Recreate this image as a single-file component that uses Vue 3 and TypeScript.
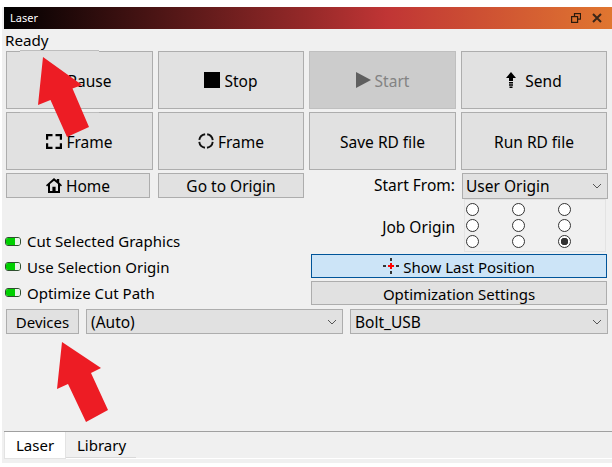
<script setup lang="ts">
const columns = [0, 1, 2];
const rows = [0, 1, 2];
const options = ['Cut Selected Graphics', 'Use Selection Origin', 'Optimize Cut Path'];
</script>

<template>
  <div class="panel">
    <header class="titlebar">
      <span class="title">Laser</span>
      <span class="window-buttons">
        <svg width="10" height="10" viewBox="0 0 10 10" fill="none" stroke="#2a1a0c" stroke-width="1.2">
          <rect x="3.5" y="0.6" width="6" height="5.5" />
          <rect x="0.6" y="3.6" width="6" height="5.8" fill="#d9702f" />
        </svg>
        <svg width="10" height="10" viewBox="0 0 10 10" fill="none" stroke="#3a2618" stroke-width="2">
          <path d="M1 1l8 8M9 1l-8 8" />
        </svg>
      </span>
    </header>
    <div class="status">Ready</div>

    <section class="actions">
      <button class="btn big">
        <svg width="16" height="16" viewBox="0 0 16 16"><path d="M2 1h4v14H2zM10 1h4v14h-4z" /></svg>
        <span>Pause</span>
      </button>
      <button class="btn big">
        <svg width="16" height="16" viewBox="0 0 16 16"><rect width="16" height="16" /></svg>
        <span>Stop</span>
      </button>
      <button class="btn big disabled">
        <svg width="15" height="16" viewBox="0 0 15 16"><path d="M0 0l15 8L0 16z" fill="#5f5f5f" /></svg>
        <span>Start</span>
      </button>
      <button class="btn big send">
        <svg width="10" height="16" viewBox="0 0 10 16"><path d="M5 0l5 6H7v3H3V6H0zM3 10h4v1.5H3zM3 12.2h4v1.5H3zM3.5 14.4h3V16h-3z" /></svg>
        <span>Send</span>
      </button>

      <button class="btn big">
        <svg width="16" height="15" viewBox="0 0 16 15" fill="none" stroke="#000" stroke-width="2.2"><path d="M6.5 1.1H1.1v4.6M9.5 1.1h5.4v4.6M6.5 13.9H1.1V9.3M9.5 13.9h5.4V9.3" /></svg>
        <span>Frame</span>
      </button>
      <button class="btn big">
        <svg width="16" height="16" viewBox="0 0 16 16" fill="none" stroke="#111" stroke-width="1.9"><circle cx="8" cy="8" r="6.8" stroke-dasharray="8.6 2.08" stroke-dashoffset="-1" /></svg>
        <span>Frame</span>
      </button>
      <button class="btn big"><span>Save RD file</span></button>
      <button class="btn big"><span>Run RD file</span></button>

      <button class="btn short home">
        <svg width="16" height="15" viewBox="0 0 16 15"><path fill-rule="evenodd" d="M8 0l2.8 2.5V1h2.4v3.6L16 7.2l-1.1 1.2-.9-.8V15H2V7.6l-.9.8L0 7.2zM4 6.1V13h2.4V8.8h3.2V13H12V6.1L8 2.7z" /></svg>
        <span>Home</span>
      </button>
      <button class="btn short"><span>Go to Origin</span></button>
      <label class="field-label">Start From:</label>
      <div class="combo start-from">
        <span>User Origin</span>
        <svg class="chevron" width="10" height="6" viewBox="0 0 10 6"><path d="M1 1l4 4 4-4" /></svg>
      </div>
    </section>

    <section class="middle">
      <ul class="options">
        <li v-for="option in options" :key="option" class="option">
          <span class="toggle"><i></i><b></b></span>
          <span>{{ option }}</span>
        </li>
      </ul>
      <div class="controls">
        <div class="job-row">
          <span class="job-label">Job Origin</span>
          <div class="radio-grid">
            <template v-for="r in rows" :key="r">
              <input
                v-for="c in columns"
                :key="c"
                type="radio"
                name="origin"
                :checked="r === 2 && c === 2"
              />
            </template>
          </div>
        </div>
        <button class="btn wide active">
          <svg width="16" height="16" viewBox="0 0 16 16">
            <path d="M7 0h2v3H7zM7 13h2v3H7zM0 7h3v2H0zM13 7h3v2h-3z" fill="#333" />
            <path d="M5 7h6v2H5zM7 5h2v6H7z" fill="#f00" />
          </svg>
          <span>Show Last Position</span>
        </button>
        <button class="btn wide"><span>Optimization Settings</span></button>
      </div>
    </section>

    <section class="devices">
      <button class="btn device-btn"><span>Devices</span></button>
      <div class="combo auto">
        <span>(Auto)</span>
        <svg class="chevron" width="10" height="6" viewBox="0 0 10 6"><path d="M1 1l4 4 4-4" /></svg>
      </div>
      <div class="combo bolt">
        <span>Bolt_USB</span>
        <svg class="chevron" width="10" height="6" viewBox="0 0 10 6"><path d="M1 1l4 4 4-4" /></svg>
      </div>
    </section>

    <nav class="tabs">
      <span class="tab current">Laser</span>
      <span class="tab">Library</span>
    </nav>

    <svg class="callout" width="612" height="467" viewBox="0 0 612 467">
      <path d="M20 50h79v1H20zM20 112h79v1H20z" fill="#bdbdbd" />
      <path d="M20 51h79v1H20z" fill="#e1e1e1" />
      <path d="M43 57L82 85L72.5 88.5L89 127L67 137L50.5 100L38 105Z" fill="#ed1c24" />
      <path d="M62 342L101 368L91 373L108 410L86 422L68 384L57 389Z" fill="#ed1c24" />
    </svg>
  </div>
</template>

<style>
html,
body {
  margin: 0;
  background: #fff;
}
</style>

<style scoped>
.panel {
  position: relative;
  box-sizing: border-box;
  width: 610px;
  height: 456px;
  margin: 7px 0 0 2px;
  background: #f0f0f0;
  display: flex;
  flex-direction: column;
  font: 15.5px/20px "Noto Sans", sans-serif;
  color: #000;
}
.titlebar {
  height: 22px;
  margin-left: 2px;
  display: flex;
  align-items: center;
  justify-content: space-between;
  background: linear-gradient(90deg, #000 0%, #962929 50%, #c03535 63%, #e07630 100%);
  color: #fff;
  font-size: 11px;
}
.title {
  padding-left: 6px;
}
.window-buttons {
  display: flex;
  gap: 11px;
  padding-right: 10px;
}
.status {
  height: 22px;
  line-height: 22px;
  padding-left: 3px;
  font-size: 15.2px;
}
.actions {
  display: grid;
  grid-template-columns: 147px 146px 147px 146px;
  grid-template-rows: 58px 58px 25px;
  gap: 3px 5px;
  margin-left: 4px;
}
.btn {
  box-sizing: border-box;
  display: flex;
  align-items: center;
  justify-content: center;
  gap: 4px;
  padding: 0;
  margin: 0;
  border: 1px solid #adadad;
  background: #e1e1e1;
  color: #000;
  font: inherit;
}
.big span {
  padding-top: 1px;
}
.disabled {
  background: #cccccc;
  border-color: #bfbfbf;
  color: #838383;
}
.send {
  gap: 9px;
}
.home {
  width: 144px;
}
.field-label {
  line-height: 25px;
  text-align: right;
  padding-right: 1px;
}
.combo {
  box-sizing: border-box;
  display: flex;
  align-items: center;
  justify-content: space-between;
  height: 25px;
  padding: 0 5px 0 3px;
  border: 1px solid #adadad;
  background: #e1e1e1;
}
.chevron {
  fill: none;
  stroke: #555;
  stroke-width: 1;
}
.start-from {
  width: 146px;
  height: 26px;
  margin-left: 1px;
}
.middle {
  display: flex;
  height: 106px;
  margin-top: 1px;
}
.options {
  width: 309px;
  list-style: none;
  margin: 0;
  padding: 29px 0 0 3px;
  box-sizing: border-box;
  display: grid;
  grid-template-rows: 26px 25px 27px;
  font-size: 15px;
}
.option {
  display: flex;
  align-items: center;
  gap: 6px;
}
.toggle {
  display: flex;
  width: 16px;
  height: 9px;
  box-sizing: border-box;
  border: 1px solid #2f4f2f;
  border-radius: 3px;
  overflow: hidden;
}
.toggle i {
  width: 9px;
  background: #00d000;
}
.toggle b {
  flex: 1;
  background: #e8f4e8;
}
.controls {
  width: 296px;
  display: flex;
  flex-direction: column;
}
.job-row {
  display: flex;
  align-items: center;
  justify-content: flex-end;
  gap: 9px;
  height: 53px;
  margin-right: 1px;
}
.job-label {
  padding-top: 2px;
}
.radio-grid {
  box-sizing: border-box;
  width: 142px;
  height: 53px;
  border: 1px solid #e3e3e3;
  padding: 3px 1px;
  display: grid;
  grid-template-columns: repeat(3, 13px);
  grid-auto-rows: 13px;
  gap: 3px 33px;
}
.radio-grid input {
  appearance: none;
  box-sizing: border-box;
  width: 13px;
  height: 13px;
  margin: 0;
  border: 1px solid #333;
  border-radius: 50%;
  background: #fff;
}
.radio-grid input:checked {
  background: radial-gradient(circle, #333 0 3.5px, #fff 4px);
}
.wide {
  height: 24px;
  flex: none;
  font-size: 15px;
}
.wide span {
  padding-top: 2px;
}
.active {
  margin: 2px 0 3px;
  background: #cce4f7;
  border-color: #005499;
}
.devices {
  display: flex;
  gap: 7px;
  margin: 4px 0 0 4px;
}
.device-btn {
  width: 73px;
  height: 25px;
  font-size: 15px;
}
.auto {
  width: 257px;
  padding-left: 4px;
}
.bolt {
  width: 258px;
  padding-left: 4px;
}
.tabs {
  display: flex;
  margin: auto 0 4px 2px;
  height: 28px;
  box-sizing: border-box;
  border-top: 1px solid #a0a0a0;
  border-bottom: 1px solid #fff;
  font-size: 15px;
}
.tab {
  box-sizing: border-box;
  height: 26px;
  padding: 3px 11px 0 11px;
  border-bottom: 1px solid #d9d9d9;
  width: 70px;
}
.tab.current {
  width: 62px;
  background: #fff;
  padding-left: 11px;
  border: 1px solid #e3e3e3;
  border-top: 0;
  height: 27px;
  margin-bottom: -1px;
}
.callout {
  position: absolute;
  left: -2px;
  top: -7px;
  pointer-events: none;
}
</style>
